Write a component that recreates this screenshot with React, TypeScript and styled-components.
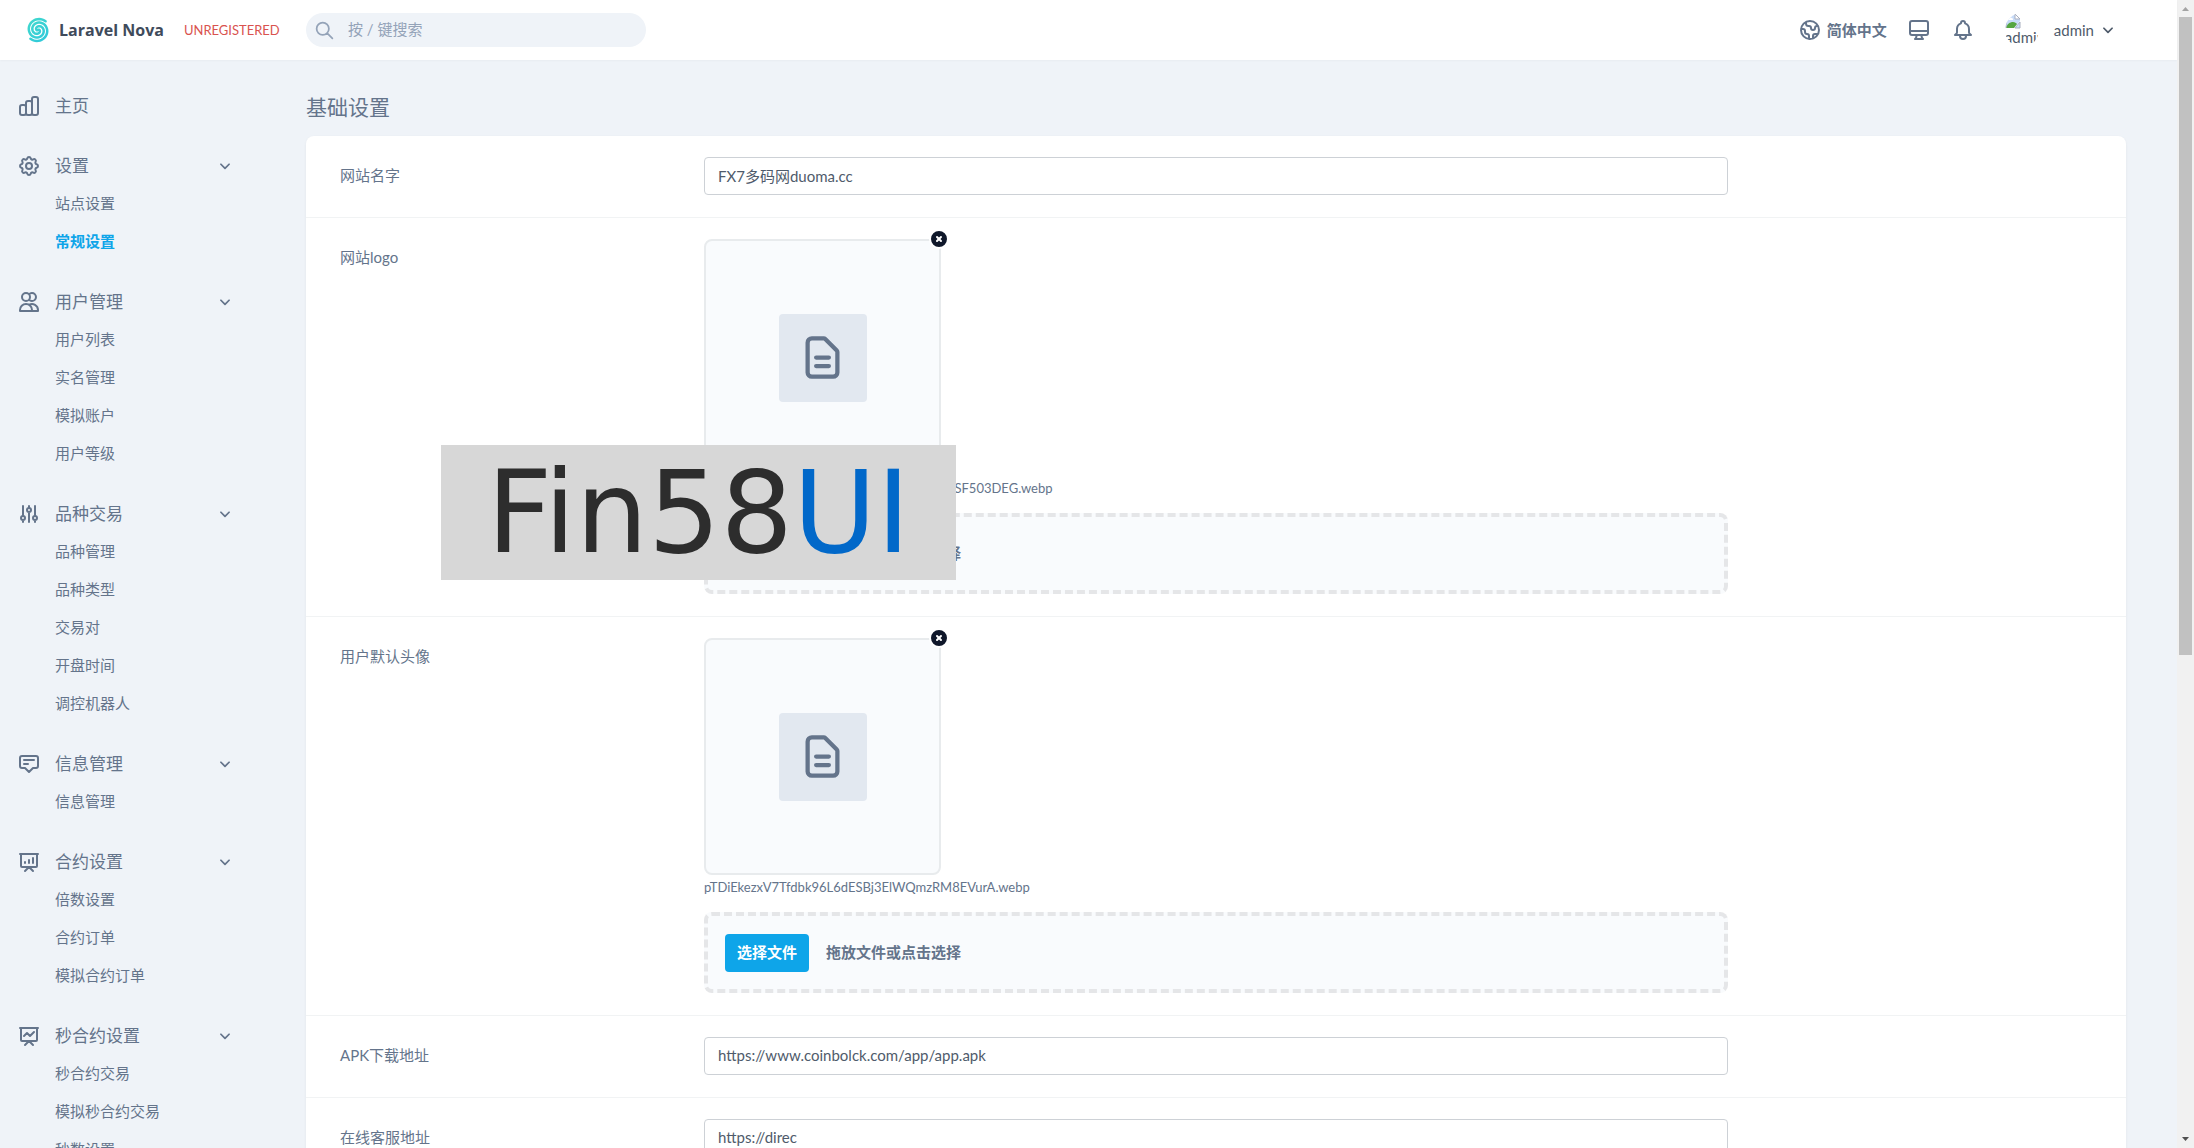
import React, { useState } from "react";
import styled, { createGlobalStyle } from "styled-components";
import type { IconType } from "react-icons";
import {
  HiOutlineAdjustments,
  HiOutlineAnnotation,
  HiOutlineBell,
  HiOutlineChartBar,
  HiOutlineChevronDown,
  HiOutlineCog,
  HiOutlineDesktopComputer,
  HiOutlineDocumentText,
  HiOutlineGlobe,
  HiOutlinePresentationChartBar,
  HiOutlinePresentationChartLine,
  HiOutlineSearch,
  HiOutlineUsers,
  HiXCircle,
} from "react-icons/hi";

const c = {
  page: "#eff3f8",
  text: "#64748b",
  field: "#4f5b6b",
  accent: "#0ea5e9",
  line: "#f1f3f4",
};

const GlobalStyle = createGlobalStyle`
  *, *::before, *::after { box-sizing: border-box; }
  body {
    margin: 0;
    background: ${c.page};
    color: ${c.text};
    font-family: "Lato", "Noto Sans CJK SC", sans-serif;
    font-size: 15px;
    line-height: 22px;
  }
  button, input { font: inherit; color: inherit; }
  button { border: 0; padding: 0; background: none; cursor: pointer; }
  a { color: inherit; text-decoration: none; }
`;

const Frame = styled.div`
  display: flex;
  height: 100vh;
  overflow: hidden;
`;

const Page = styled.div`
  flex: 1;
  min-width: 0;
  display: flex;
  flex-direction: column;
  position: relative;
`;

/* Header */
const Header = styled.header`
  flex: none;
  display: flex;
  align-items: center;
  height: 60px;
  padding-right: 62px;
  background: #fff;
  box-shadow: 0 1px 2px rgba(15, 23, 42, 0.03);
`;

const Brand = styled.div`
  display: flex;
  align-items: center;
  width: 306px;
  padding-left: 25px;
`;

const BrandLink = styled.a`
  display: flex;
  align-items: center;
  gap: 8px;
  color: #3f4b5b;
  font-family: "Open Sans", sans-serif;
  font-size: 16px;
  font-weight: 700;
`;

const LicenseLink = styled.a`
  margin-left: 20px;
  color: #d9534f;
  font-size: 13px;
`;

const SearchBox = styled.label`
  display: flex;
  align-items: center;
  gap: 13px;
  width: 340px;
  height: 34px;
  padding: 0 8px;
  border-radius: 17px;
  background: ${c.page};
  color: #94a3b8;
`;

const SearchInput = styled.input`
  flex: 1;
  min-width: 0;
  padding: 0 0 2px;
  border: 0;
  outline: 0;
  background: transparent;
  &::placeholder { color: #94a3b8; opacity: 1; }
`;

const HeaderTools = styled.div`
  display: flex;
  align-items: center;
  margin-left: auto;
`;

const ToolButton = styled.button<{ $gap?: number }>`
  display: flex;
  align-items: center;
  gap: 5px;
  margin-right: ${(p) => p.$gap ?? 20}px;
  font-weight: 700;
`;

const UserButton = styled.button`
  display: flex;
  align-items: center;
  gap: 7px;
  color: ${c.field};
`;

const Avatar = styled.span`
  width: 34px;
  height: 34px;
  margin-right: 8px;
  border-radius: 17px;
  overflow: hidden;
  line-height: 16px;
  text-align: left;
`;

/* Body */
const Body = styled.div`
  flex: 1;
  min-height: 0;
  display: flex;
`;

const Sidebar = styled.nav`
  flex: none;
  display: flex;
  flex-direction: column;
  gap: 23px;
  width: 255px;
  padding: 27px 23px 0 17px;
  overflow: hidden;
`;

const Section = styled.section`
  flex: none;
`;

const SectionHead = styled.button`
  display: flex;
  align-items: center;
  gap: 14px;
  width: 100%;
  height: 37px;
  font-size: 17px;
`;

const SectionLabel = styled.span`
  flex: 1;
  text-align: left;
`;

const SubList = styled.ul`
  margin: 0;
  padding: 0 0 0 38px;
  list-style: none;
`;

const SubItem = styled.li<{ $active?: boolean }>`
  display: flex;
  align-items: center;
  height: 38px;
  color: ${(p) => (p.$active ? c.accent : c.text)};
  font-weight: ${(p) => (p.$active ? 700 : 400)};
`;

const Main = styled.main`
  flex: 1;
  min-width: 0;
  padding: 32px 51px 0;
  overflow: hidden;
`;

const Title = styled.h1`
  margin: 0 0 14px;
  font-size: 21px;
  font-weight: 400;
  line-height: 30px;
`;

const Card = styled.form`
  border-radius: 8px;
  background: #fff;
  box-shadow: 0 1px 3px rgba(15, 23, 42, 0.06);
`;

const Row = styled.div`
  display: flex;
  border-bottom: 1px solid ${c.line};
`;

const RowLabel = styled.label`
  width: 20%;
  padding: 28px 34px 0;
`;

const RowField = styled.div`
  width: 60%;
  padding: 21px 34px 22px;
`;

const TextInput = styled.input`
  display: block;
  width: 100%;
  height: 38px;
  padding: 0 13px 2px;
  border: 1px solid #cdd1d6;
  border-radius: 4px;
  outline: 0;
  background: #fff;
  color: ${c.field};
`;

const Preview = styled.div`
  position: relative;
  display: flex;
  align-items: center;
  justify-content: center;
  width: 237px;
  height: 237px;
  border: 2px solid #e8ebed;
  border-radius: 8px;
  background: #f9fbfd;
`;

const PreviewTile = styled.div`
  display: flex;
  align-items: center;
  justify-content: center;
  width: 88px;
  height: 88px;
  border-radius: 4px;
  background: #e2e8f0;
`;

const RemoveButton = styled.button`
  position: absolute;
  top: -12px;
  right: -10px;
  display: flex;
  border-radius: 10px;
  background: #fff;
  color: #0f172a;
`;

const FileName = styled.p`
  margin: 4px 0 17px;
  font-size: 13px;
  line-height: 16px;
`;

const DropZone = styled.div`
  display: flex;
  align-items: center;
  gap: 17px;
  height: 81px;
  padding: 0 17px;
  border: 4px dashed #e5e6e8;
  border-radius: 8px;
  background: #f9fbfd;
  font-weight: 700;
`;

const PickButton = styled.button`
  height: 38px;
  padding: 0 12px 2px;
  border-radius: 4px;
  background: ${c.accent};
  color: #fff;
  font-weight: 700;
`;

const DropHint = styled.span`
  padding-bottom: 2px;
`;

/* Banner laid over the page */
const Banner = styled.div`
  position: absolute;
  top: 445px;
  left: 441px;
  display: flex;
  align-items: center;
  justify-content: center;
  width: 515px;
  height: 135px;
  background: #d7d7d7;
  color: #2d2d2d;
  font-family: "DejaVu Sans", sans-serif;
  font-size: 114px;
  line-height: 135px;
`;

const BannerAccent = styled.span`
  color: #0168c9;
`;

/* Scroll bar */
const ScrollBar = styled.div`
  flex: none;
  display: flex;
  flex-direction: column;
  align-items: center;
  width: 17px;
  background: #f1f1f1;
`;

const ScrollArrow = styled.svg`
  flex: none;
  display: block;
  width: 17px;
  height: 17px;
`;

const ScrollTrack = styled.div`
  flex: 1;
  width: 13px;
`;

const ScrollThumb = styled.div`
  height: 57.3%;
  background: #c1c1c1;
`;

function spiralArm(start: number) {
  const points: string[] = [];
  for (let i = 0; i <= 60; i++) {
    const t = i / 60;
    const angle = start + t * Math.PI * 2.9;
    const r = 0.4 + 11.2 * Math.pow(t, 0.85);
    points.push(`${(13 + r * Math.cos(angle)).toFixed(2)} ${(13 + r * Math.sin(angle)).toFixed(2)}`);
  }
  return `M${points.join("L")}`;
}

const NovaMark = () => (
  <svg width="26" height="26" viewBox="0 0 26 26" fill="none" aria-hidden="true">
    <defs>
      <linearGradient id="nova" x1="0" y1="0" x2="26" y2="26" gradientUnits="userSpaceOnUse">
        <stop offset="0" stopColor="#45dccb" />
        <stop offset="1" stopColor="#2cc5dd" />
      </linearGradient>
    </defs>
    {[0, 1].map((n) => (
      <path
        key={n}
        d={spiralArm(2.6 + n * Math.PI)}
        stroke="url(#nova)"
        strokeWidth="2.5"
        strokeLinecap="round"
      />
    ))}
  </svg>
);

const BrokenImageIcon = styled.svg`
  display: block;
`;

const BrokenImage = () => (
  <BrokenImageIcon width="16" height="16" viewBox="0 0 16 16" aria-hidden="true">
    <path d="M1 1h9l5 5v2l-6 7H1z" fill="#c8dcf8" />
    <path d="M2 6a2 2 0 0 1 3-1 2 2 0 0 1 3 2H2z" fill="#fff" />
    <path d="M1 15c1-4 4-6 7-6 2 0 3 1 4 2l-3 4z" fill="#56a641" />
    <path d="M1 15V1h9l5 5" fill="none" stroke="#a9afc0" />
    <path d="M10 1v5h5z" fill="#fff" stroke="#a9afc0" />
    <path d="M15 9v6h-5z" fill="#c8dcf8" stroke="#a9afc0" />
  </BrokenImageIcon>
);

const Chevron = styled(HiOutlineChevronDown)`
  width: 14px;
  height: 14px;
  path { stroke-width: 3px; }
`;

type MenuSection = { label: string; icon: IconType; items: string[] };

const menu: MenuSection[] = [
  { label: "主页", icon: HiOutlineChartBar, items: [] },
  { label: "设置", icon: HiOutlineCog, items: ["站点设置", "常规设置"] },
  { label: "用户管理", icon: HiOutlineUsers, items: ["用户列表", "实名管理", "模拟账户", "用户等级"] },
  { label: "品种交易", icon: HiOutlineAdjustments, items: ["品种管理", "品种类型", "交易对", "开盘时间", "调控机器人"] },
  { label: "信息管理", icon: HiOutlineAnnotation, items: ["信息管理"] },
  { label: "合约设置", icon: HiOutlinePresentationChartBar, items: ["倍数设置", "合约订单", "模拟合约订单"] },
  { label: "秒合约设置", icon: HiOutlinePresentationChartLine, items: ["秒合约交易", "模拟秒合约交易", "秒数设置"] },
];

function MenuGroup({ section }: { section: MenuSection }) {
  const [open, setOpen] = useState(true);
  const Icon = section.icon;
  const hasItems = section.items.length > 0;
  return (
    <Section>
      <SectionHead type="button" onClick={() => hasItems && setOpen(!open)}>
        <Icon size={24} />
        <SectionLabel>{section.label}</SectionLabel>
        {hasItems && <Chevron />}
      </SectionHead>
      {hasItems && open && (
        <SubList>
          {section.items.map((item) => (
            <SubItem key={item} $active={item === "常规设置"}>
              <a href="#">{item}</a>
            </SubItem>
          ))}
        </SubList>
      )}
    </Section>
  );
}

function TextRow({ id, label, value }: { id: string; label: string; value: string }) {
  return (
    <Row>
      <RowLabel htmlFor={id}>{label}</RowLabel>
      <RowField>
        <TextInput id={id} type="text" defaultValue={value} />
      </RowField>
    </Row>
  );
}

function FileRow({ id, label, file }: { id: string; label: string; file: string }) {
  return (
    <Row>
      <RowLabel htmlFor={id}>{label}</RowLabel>
      <RowField>
        <Preview>
          <PreviewTile>
            <HiOutlineDocumentText size={51} />
          </PreviewTile>
          <RemoveButton type="button" aria-label="删除">
            <HiXCircle size={20} />
          </RemoveButton>
        </Preview>
        <FileName>{file}</FileName>
        <DropZone>
          <PickButton id={id} type="button">选择文件</PickButton>
          <DropHint>拖放文件或点击选择</DropHint>
        </DropZone>
      </RowField>
    </Row>
  );
}

export default function App() {
  return (
    <>
      <GlobalStyle />
      <Frame>
        <Page>
          <Header>
            <Brand>
              <BrandLink href="#">
                <NovaMark />
                Laravel Nova
              </BrandLink>
              <LicenseLink href="#">UNREGISTERED</LicenseLink>
            </Brand>
            <SearchBox>
              <HiOutlineSearch size={21} />
              <SearchInput type="search" placeholder="按 / 键搜索" aria-label="搜索" />
            </SearchBox>
            <HeaderTools>
              <ToolButton type="button">
                <HiOutlineGlobe size={24} />
                简体中文
              </ToolButton>
              <ToolButton type="button" aria-label="主题">
                <HiOutlineDesktopComputer size={24} />
              </ToolButton>
              <ToolButton type="button" aria-label="通知" $gap={30}>
                <HiOutlineBell size={24} />
              </ToolButton>
              <UserButton type="button">
                <Avatar>
                  <BrokenImage />
                  admin
                </Avatar>
                admin
                <Chevron />
              </UserButton>
            </HeaderTools>
          </Header>
          <Body>
            <Sidebar>
              {menu.map((section) => (
                <MenuGroup key={section.label} section={section} />
              ))}
            </Sidebar>
            <Main>
              <Title>基础设置</Title>
              <Card>
                <TextRow id="site-name" label="网站名字" value="FX7多码网duoma.cc" />
                <FileRow id="site-logo" label="网站logo" file="kQ2vWm8RzT4nYb6LpXc9HdJf3GsAeUw7rSF503DEG.webp" />
                <FileRow id="user-avatar" label="用户默认头像" file="pTDiEkezxV7Tfdbk96L6dESBj3ElWQmzRM8EVurA.webp" />
                <TextRow id="apk-url" label="APK下载地址" value="https://www.coinbolck.com/app/app.apk" />
                <TextRow id="support-url" label="在线客服地址" value="https://direc" />
              </Card>
            </Main>
          </Body>
          <Banner>
            <span>
              Fin58<BannerAccent>UI</BannerAccent>
            </span>
          </Banner>
        </Page>
        <ScrollBar aria-hidden="true">
          <ScrollArrow viewBox="0 0 17 17">
            <path d="M5 11h7L8.500 7z" fill="#a3a3a3" />
          </ScrollArrow>
          <ScrollTrack>
            <ScrollThumb />
          </ScrollTrack>
          <ScrollArrow viewBox="0 0 17 17">
            <path d="M5 6h7l-3.500 4z" fill="#505050" />
          </ScrollArrow>
        </ScrollBar>
      </Frame>
    </>
  );
}
